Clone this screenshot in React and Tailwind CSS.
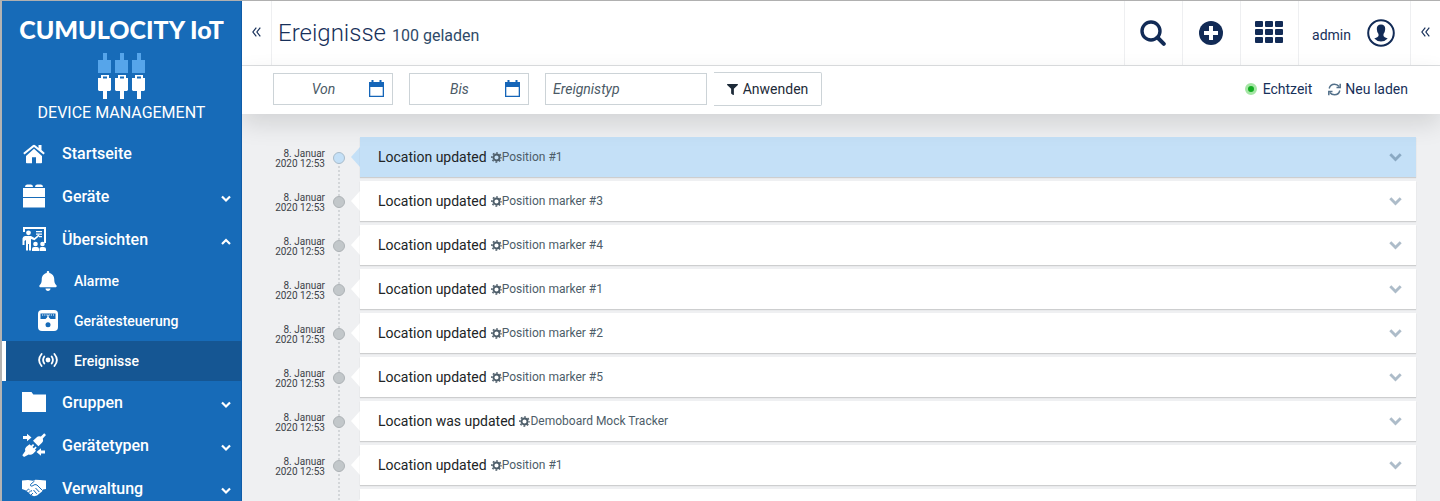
import React from "react";
import { FaBell, FaFilter } from "react-icons/fa";

function Logo() {
  return (
    <svg width="48" height="46" viewBox="0 0 48 46" aria-hidden="true">
      {[0, 17, 34].map((x) => (
        <g key={x} transform={`translate(${x} 0)`}>
          <path fill="#56a5ea" d="M5 0h4v7h4v13H0V7h5z" />
          <path fill="#fff" fillRule="evenodd" d="M3 22h8v3h2v12l-1 1H9v8H5v-8H1l-1-1V25h3zM5 23.500v2h4v-2z" />
        </g>
      ))}
    </svg>
  );
}

function HomeIcon() {
  return (
    <svg width="22" height="20" viewBox="0 0 22 20" fill="#fff" aria-hidden="true">
      <path d="M11 4.800 19 12v6.500q0 .8-.8.8H13v-6H9v6H3.800q-.8 0-.8-.8V12z" />
      <path d="M15.500 1h3v5l3.300 3.100-1.300 1.500L11 2.900l-9.500 7.700L.2 9.100 9.800 1.200q1.200-.9 2.400 0l3.300 2.700z" />
    </svg>
  );
}

function DevicesIcon() {
  return (
    <svg width="24" height="24" viewBox="0 0 24 24" fill="#fff" className="-translate-y-px" aria-hidden="true">
      <path d="M3 3q0-2.500 2-2.500h4q2 0 2 2.500zM13 3q0-2.500 2-2.500h4q2 0 2 2.500zM1 4h22v9H1zM1 14h22v9.500H1z" />
    </svg>
  );
}

function BoardIcon() {
  return (
    <svg width="24" height="26" viewBox="0 0 24 26" fill="#fff" className="-translate-y-px" aria-hidden="true">
      <path d="M1 1h23v16h-2V3H3v3H1z" />
      <circle cx="6.500" cy="6.800" r="2.400" />
      <path d="M3 10h6l3.500 2 4-3.500 1 1.200-5 4.500L9 13v11.500H7V18H6v6.500H4V14l-1.500 1v4H.5v-6.500Q1 10 3 10z" />
      <path d="M14 5h6v1.200h-6zM14 7.500h6v1.200h-6zM17 10h3v1.200h-3z" />
      <circle cx="13.500" cy="18" r="2.300" />
      <circle cx="20.500" cy="18" r="2.300" />
      <path d="M10 25v-2q0-2 2-2h3q2 0 2 2v2zM17.500 25v-2q0-2 2-2h2q2.500 0 2.500 2v2z" />
    </svg>
  );
}

function ControlIcon() {
  return (
    <svg width="20" height="21" viewBox="0 0 20 21" className="-translate-y-px" aria-hidden="true">
      <rect width="20" height="21" rx="4" fill="#fff" />
      <path fill="#176bb8" d="M2.500 3.500h15V9h-5L10 6.500 7.500 9h-5z" />
      <path stroke="#fff" strokeWidth="1.200" strokeDasharray="1.200 1" d="M4 5h12" />
      <circle cx="10" cy="14.800" r="2.500" fill="#176bb8" />
      <path stroke="#fff" strokeWidth="1.200" d="M10 5v7" />
    </svg>
  );
}

function SignalIcon() {
  return (
    <svg width="20" height="16" viewBox="0 0 20 16" fill="none" stroke="#fff" strokeWidth="1.800" strokeLinecap="round" className="-translate-y-px" aria-hidden="true">
      <circle cx="10" cy="8" r="2.400" fill="#fff" stroke="none" />
      <path d="M6.300 4.500Q3.900 8 6.300 11.500M13.700 4.500Q16.100 8 13.700 11.500M3.600 2Q-1.400 8 3.600 14M16.400 2Q21.400 8 16.400 14" />
    </svg>
  );
}

function FolderIcon() {
  return (
    <svg width="24" height="20" viewBox="0 0 24 20" fill="#fff" className="-translate-y-px" aria-hidden="true">
      <path d="M0 0h9.500l1.800 2.500H24V20H0z" />
    </svg>
  );
}

function PlugIcon() {
  return (
    <svg width="24" height="24" viewBox="0 0 24 24" fill="#fff" className="-translate-y-px" aria-hidden="true">
      <path d="M22.200.3 24 2.100l-3.200 3.300q1 2.600-.8 4.400l-3.600 3.400-5.400-5.400 3.500-3.400q1.900-1.800 4.400-.8z" />
      <path d="m7.500 11.200 1.700 1.500 1.800-1.700 1.200 1.200-1.700 1.800 1.300 1.300 1.800-1.700 1.100 1.200-1.700 1.700 1 1.300-3 2.900q-2 1.600-4.300.7L2 24 .3 22.200l3-4.100q-1-2.300.8-4.100z" />
      <path d="M1 3h4V.800l4.500 3.700L5 8.200V6H1zM23 17.500h-4v-2.200L14.500 19l4.500 3.700v-2.200h4z" />
    </svg>
  );
}

function HandshakeIcon() {
  return (
    <svg width="24" height="18" viewBox="0 0 24 18" className="-translate-y-px" aria-hidden="true">
      <path fill="#fff" d="M0 1.500 6 1l5 .8L13.500.8 18 1l6 .5V10l-3 .5-1 2-2.500 2-2.500 2-3 .8-3-1.300-5-4.500L0 10z" />
      <path
        fill="none"
        stroke="#176bb8"
        strokeWidth="1"
        d="M12.500 2 8.500 5.500q-.4 1.700 1.300 1.700L13 5.500l2 .5 5.500 5.500M13.500 9l3.800 4M11.500 11l3.200 3.800M4.500 12l2-2 1 .8M6.500 14l2.500-2.500 1 .8M9 16l2-2"
      />
    </svg>
  );
}

function GearIcon() {
  return (
    <svg width="11" height="11" viewBox="0 0 11 11" fill="none" stroke="#4d5d69" aria-hidden="true">
      <circle cx="5.500" cy="5.500" r="3" strokeWidth="1.900" />
      <circle cx="5.500" cy="5.500" r="4.600" strokeWidth="1.500" strokeDasharray="1.800 1.813" strokeDashoffset=".9" />
    </svg>
  );
}

function Chevron({ up = false, className = "", size = 10 }) {
  return (
    <svg width={size} height={size} viewBox="0 0 10 10" fill="none" stroke="currentColor" strokeWidth="2.200" className={className} aria-hidden="true">
      <path d={up ? "M1 7 5 3 9 7" : "M1 2.500 5 6.500 9 2.500"} />
    </svg>
  );
}

function DoubleLeft() {
  return (
    <svg width="9" height="10" viewBox="0 0 9 10" fill="none" stroke="#17305a" strokeWidth="1.200" className="-translate-y-px" aria-hidden="true">
      <path d="M4.300.7.900 5l3.400 4.300M8.300.7 4.900 5l3.400 4.300" />
    </svg>
  );
}

function CalendarIcon() {
  return (
    <svg width="15" height="17" viewBox="0 0 15 17" className="-translate-y-px" aria-hidden="true">
      <path fill="#1565b8" fillRule="evenodd" d="M2.500 0h2v2h6V0h2v2H15v15H0V2h2.500zM1.300 7v8.700h12.400V7z" />
    </svg>
  );
}

function SyncIcon() {
  return (
    <svg width="13" height="13" viewBox="0 0 13 13" fill="none" stroke="#53708a" strokeWidth="1.500" aria-hidden="true">
      <path d="M1.200 5.500Q2.200 1.200 6.500 1.200 9.300 1.200 11.200 3.500M11.800 7.500Q10.800 11.800 6.500 11.800 3.700 11.800 1.800 9.500" />
      <path d="M12.200.8v3.700H8.500M.8 12.200V8.500h3.700" />
    </svg>
  );
}

const linkBase = "flex w-full items-center gap-4 pr-[10px] text-left font-medium text-white";

function NavItem({ icon, label, open, plain }) {
  const Tag = plain ? "a" : "button";
  const props = plain ? { href: "#start" } : { type: "button", "aria-expanded": Boolean(open) };
  return (
    <Tag {...props} className={`${linkBase} h-[43px] pl-5 text-base`}>
      <span className="flex w-6 justify-center">{icon}</span>
      <span className="flex-1">{label}</span>
      {!plain && <Chevron up={open} className="mt-1" />}
    </Tag>
  );
}

function SubItem({ icon, label, active }) {
  return (
    <a
      href={`#${label}`}
      aria-current={active ? "page" : undefined}
      className={`${linkBase} h-10 border-l-4 pl-8 text-sm ${active ? "border-white bg-[#155693]" : "border-transparent"}`}
    >
      <span className="flex w-5 justify-center">{icon}</span>
      <span>{label}</span>
    </a>
  );
}

function Sidebar() {
  return (
    <aside className="relative z-20 flex w-60 shrink-0 flex-col border-r border-[#0f5ca8] bg-[#176bb8]">
      <div className="flex h-[131px] shrink-0 flex-col items-center pt-3 text-white">
        <div className="font-[Lato] text-[25px] leading-8 font-black whitespace-nowrap">CUMULOCITY IoT</div>
        <div className="mt-2">
          <Logo />
        </div>
        <div className="mt-1 text-base leading-5">DEVICE MANAGEMENT</div>
      </div>
      <nav aria-label="Navigation">
        <NavItem plain icon={<HomeIcon />} label="Startseite" />
        <NavItem icon={<DevicesIcon />} label="Geräte" />
        <NavItem open icon={<BoardIcon />} label="Übersichten" />
        <SubItem icon={<FaBell size={20} />} label="Alarme" />
        <SubItem icon={<ControlIcon />} label="Gerätesteuerung" />
        <SubItem active icon={<SignalIcon />} label="Ereignisse" />
        <NavItem icon={<FolderIcon />} label="Gruppen" />
        <NavItem icon={<PlugIcon />} label="Gerätetypen" />
        <NavItem icon={<HandshakeIcon />} label="Verwaltung" />
      </nav>
    </aside>
  );
}

const cell = "flex items-center justify-center border-l border-[#eeeff1]";

function Header() {
  return (
    <header className="flex h-[65px] border-b border-[#dcdee0] bg-white text-[#17305a]">
      <button type="button" aria-label="Navigation einklappen" className="flex w-[30px] items-center justify-center border-r border-[#eeeff1]">
        <DoubleLeft />
      </button>
      <h1 className="flex flex-1 items-baseline gap-[6px] pt-3 pl-[6px] text-2xl leading-10 font-light">
        Ereignisse <small className="text-base font-normal text-[#2f4a68]">100 geladen</small>
      </h1>
      <button type="button" aria-label="Suche" className={`${cell} w-[58px] pr-[2px]`}>
        <svg width="26" height="26" viewBox="0 0 26 26" fill="none" stroke="#122b56" aria-hidden="true">
          <circle cx="11" cy="11" r="9" strokeWidth="3.400" />
          <path d="m17.500 17.500 6.300 6.300" strokeWidth="4" strokeLinecap="round" />
        </svg>
      </button>
      <button type="button" aria-label="Hinzufügen" className={`${cell} w-[58px] pr-[2px]`}>
        <svg width="24" height="24" viewBox="0 0 24 24" aria-hidden="true">
          <circle cx="12" cy="12" r="12" fill="#122b56" />
          <path d="M12 5v14M5 12h14" stroke="#fff" strokeWidth="4" />
        </svg>
      </button>
      <button type="button" aria-label="Anwendungen" className={`${cell} w-[58px] pr-[2px]`}>
        <svg width="28" height="22" viewBox="0 0 28 22" fill="#122b56" className="-translate-y-px" aria-hidden="true">
          {[0, 10, 20].map((x) => [0, 8, 16].map((y) => <rect key={`${x}-${y}`} x={x} y={y} width="8" height="6" rx="1" />))}
        </svg>
      </button>
      <button type="button" className={`${cell} w-28 gap-4 pr-[2px] text-sm`}>
        <span className="pt-1">admin</span>
        <svg width="28" height="28" viewBox="0 0 28 28" aria-hidden="true">
          <circle cx="14" cy="14" r="12.800" fill="#fff" stroke="#122b56" strokeWidth="2" />
          <path fill="#122b56" d="M14 5.500q4.300 0 4.200 4.500 0 2.500-1.700 5v2q.4 1.300 4.200 2.500-2.700 3-6.700 3t-6.700-3q3.800-1.200 4.200-2.500v-2q-1.700-2.500-1.700-5Q9.700 5.500 14 5.500z" />
        </svg>
      </button>
      <button type="button" aria-label="Seitenleiste öffnen" className={`${cell} w-[30px]`}>
        <DoubleLeft />
      </button>
    </header>
  );
}

function DateField({ label }) {
  return (
    <label className="flex h-8 w-[120px] items-center border border-[#ccd3d7] bg-white pr-2">
      <input type="text" aria-label={label} placeholder={label} className="min-w-0 flex-1 pl-1 text-center text-sm italic outline-none placeholder:text-[#4b5a66]" />
      <CalendarIcon />
    </label>
  );
}

function FilterBar() {
  return (
    <div className="relative z-10 flex items-center gap-4 bg-white pt-[6px] pr-8 pb-2 pl-[31px] text-sm text-[#17305a] shadow-[0_10px_24px_rgba(0,0,0,0.12)]">
      <DateField label="Von" />
      <DateField label="Bis" />
      <div className="flex items-center gap-[7px]">
        <input type="text" aria-label="Ereignistyp" placeholder="Ereignistyp" className="h-8 w-[162px] border border-[#ccd3d7] px-[7px] italic outline-none placeholder:text-[#4b5a66]" />
        <button type="button" className="flex h-[34px] w-[108px] items-center justify-center gap-[5px] rounded-r-xs border border-l-0 border-[#ccd3d7] text-[#1d2a38]">
          <FaFilter size={11} />
          Anwenden
        </button>
      </div>
      <div className="ml-auto flex items-center gap-4">
        <button type="button" className="flex items-center gap-[6px]">
          <span className="size-3 rounded-full border-3 border-[#a5e6a5] bg-[#12ad22]" />
          Echtzeit
        </button>
        <button type="button" className="flex items-center gap-1">
          <SyncIcon />
          Neu laden
        </button>
      </div>
    </div>
  );
}

const events = [
  { text: "Location updated", source: "Position #1", selected: true },
  { text: "Location updated", source: "Position marker #3" },
  { text: "Location updated", source: "Position marker #4" },
  { text: "Location updated", source: "Position marker #1" },
  { text: "Location updated", source: "Position marker #2" },
  { text: "Location updated", source: "Position marker #5" },
  { text: "Location was updated", source: "Demoboard Mock Tracker" },
  { text: "Location updated", source: "Position #1" },
  { text: "Location updated", source: "Position marker #3" },
];

function EventRow({ text, source, selected }) {
  return (
    <li className="flex h-11 shrink-0">
      <time className="w-[83px] pt-3 text-right text-[10px] leading-[10px] text-[#3c4248]">
        8. Januar
        <br />
        2020 12:53
      </time>
      <div className="relative ml-2 flex w-3 justify-center">
        <span className="mt-[22px] h-11 w-0 border-l-2 border-dotted border-[#d3d6d9]" />
        <span className={`absolute top-[15px] size-3 rounded-full border ${selected ? "border-[#a9bccb] bg-[#c4e0f7]" : "border-[#adb2b6] bg-[#c2c7ca]"}`} />
      </div>
      <svg width="9" height="20" viewBox="0 0 9 20" className="mt-[10px] ml-[6px]" fill={selected ? "#c4e0f7" : "#fff"} aria-hidden="true">
        <path d="M9 0v20L0 10z" />
      </svg>
      <button
        type="button"
        className={`flex h-10 min-w-0 flex-1 items-center pr-[14px] pl-[18px] text-left shadow-[0_1px_1px_rgba(0,0,0,0.14)] ${selected ? "bg-[#c4e0f7]" : "bg-white"}`}
      >
        <span className="text-sm text-[#212426]">{text}</span>
        <span className="ml-1 flex flex-1 items-center text-xs text-[#4d5d69]">
          <GearIcon />
          {source}
        </span>
        <Chevron size={13} className={selected ? "text-[#8aa9c3]" : "text-[#adbcc9]"} />
      </button>
    </li>
  );
}

export default function App() {
  return (
    <div className="flex h-screen overflow-hidden border-t border-l-2 border-t-[#b0b0b0] border-l-[#b3b3b3] bg-[#eff0f2] font-[Roboto,sans-serif]">
      <Sidebar />
      <div className="flex min-w-0 flex-1 flex-col">
        <Header />
        <FilterBar />
        <main className="min-h-0 flex-1 overflow-hidden pt-[23px] pr-6">
          <ol className="flex flex-col">
            {events.map((event, index) => (
              <EventRow key={index} {...event} />
            ))}
          </ol>
        </main>
      </div>
    </div>
  );
}
